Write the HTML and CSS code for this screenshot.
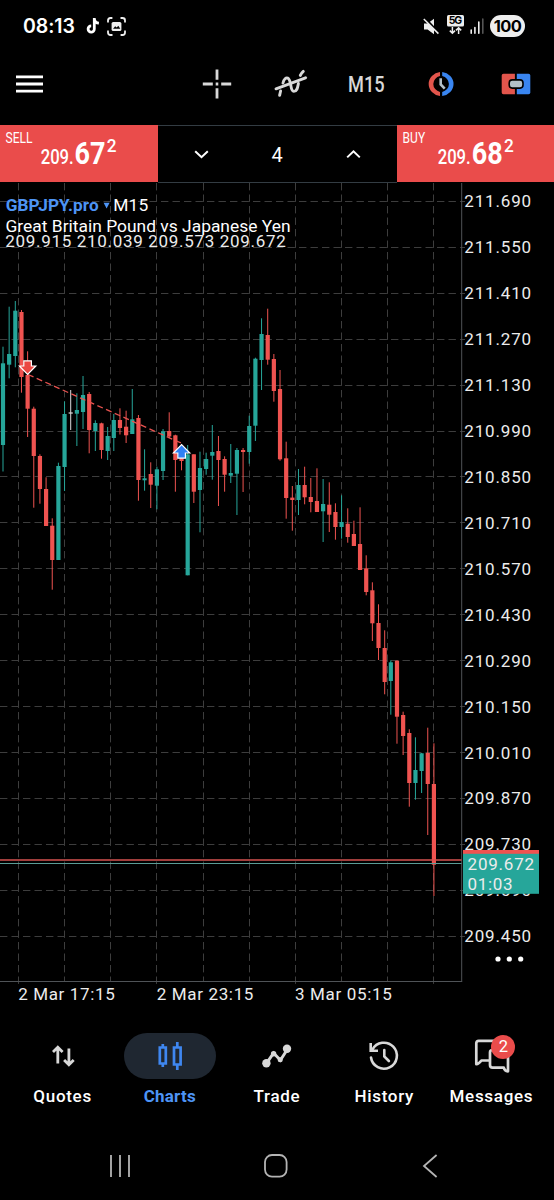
FILE: index.html
```
<!DOCTYPE html>
<html lang="en">

<head>
	<meta charset="UTF-8" />
	<meta name="viewport" content="width=device-width, initial-scale=1.0" />
	<title>GBPJPY.pro M15</title>
	<link rel="stylesheet" href="styles.css">
</head>

<body>
	<div class="status">
		<span class="time">08:13</span>
		<svg class="tiktok" width="14" height="16" viewBox="0 0 14 16">
			<path d="M8.3 0v11a3.1 3.1 0 1 1-3.1-3.1M8.3 1c.4 2.6 2 4 4.6 4.2" fill="none" stroke="#fff" stroke-width="2.8" />
		</svg>
		<svg class="shot" width="19" height="19" viewBox="0 0 19 19">
			<path d="M1 5.5V3.4Q1 1 3.4 1h2M13.5 1h2Q18 1 18 3.4v2.1M18 13.5v2Q18 18 15.6 18h-2M5.5 18h-2Q1 18 1 15.6v-2.1" fill="none" stroke="#eee" stroke-width="1.8" />
			<rect x="4.6" y="5" width="9.8" height="9" rx="1.6" fill="#eee" />
			<path d="M6 11.8l2.2-2.6 1.5 1.3 1.6-1.8 2 3.1z" fill="#000" />
		</svg>
		<div class="status-right">
			<svg width="17" height="17" viewBox="0 0 17 17">
				<path d="M1 5.5h3.6L11 .8v15.4l-6.4-4.7H1z" fill="#eee" />
				<path d="M1.6-.3l15 16" stroke="#000" stroke-width="2.2" />
				<path d="M.8 1l14.6 14.6" stroke="#eee" stroke-width="1.5" />
			</svg>
			<svg class="net" width="17" height="20" viewBox="0 0 17 20">
				<rect width="17" height="11.5" rx="1.5" fill="#eee" />
				<text x="1.8" y="9.4" class="net-text" textLength="13.4">5G</text>
				<path d="M5.4 12v6M2.8 15.6l2.6 2.6L8 15.6M11.6 19v-6M9 15.4l2.6-2.6 2.6 2.6" fill="none" stroke="#eee" stroke-width="1.5" />
			</svg>
			<svg class="signal" width="15" height="16" viewBox="0 0 15 16">
				<path d="M1.2 12v3.2M4.9 9.5v5.7M8.8 4v11.2" stroke="#eee" stroke-width="1.6" stroke-linecap="round" />
				<path d="M12.8 1v14.2" stroke="#555" stroke-width="1.6" stroke-linecap="round" />
			</svg>
			<span class="battery">100</span>
		</div>
	</div>

	<div class="toolbar">
		<svg class="menu" width="27" height="20" viewBox="0 0 27 20">
			<path d="M0 2.8h27M0 10h27M0 17.2h27" stroke="#fff" stroke-width="2.8" />
		</svg>
		<svg class="cross" width="30" height="30" viewBox="0 0 30 30">
			<path d="M15 .6v10.2M15 19.2v10.2M.8 15h10M19.2 15h10M13.7 15h2.6" stroke="#d8d8d8" stroke-width="2.8" />
		</svg>
		<svg class="indicator" width="34" height="30" viewBox="0 0 34 30">
			<g fill="none" stroke="#d8d8d8" stroke-width="2.9" stroke-linecap="round">
				<path d="M2 19.8L31.5 8.8" />
				<path d="M5.6 26.4l1-4.4M9 14c1-4.2 3-5.6 4.8-4.8 4 1.8 2 13.2 6 13.2 3.4 0 3.8-3.8 4.6-8M26.3 6.4q.8-2 3-4" />
			</g>
		</svg>
		<svg class="period" width="40" height="30" viewBox="0 0 40 30">
			<text x="1" y="22.8" textLength="36.6" lengthAdjust="spacingAndGlyphs">M15</text>
		</svg>
		<svg class="clock" width="30" height="26" viewBox="0 0 30 26">
			<path d="M14 1.1A13 12 0 0 0 14 24.9V21A8.6 8.2 0 0 1 14 5z" fill="#e2554c" />
			<path d="M16.2 1.1A13 12 0 0 1 16.2 24.9V21A8.6 8.2 0 0 0 16.2 5z" fill="#3985f0" />
			<path d="M14.7 7.2v6.2l4 4.3" fill="none" stroke="#b4c0c8" stroke-width="2.6" />
		</svg>
		<svg class="order" width="30" height="22" viewBox="0 0 30 22">
			<path d="M2.5.8h11.4v20.4H2.5Q.7 21.2.7 19.4V2.6Q.7.8 2.5.8z" fill="#e2554c" />
			<path d="M15.8.8h11.7q1.8 0 1.8 1.8v16.8q0 1.8-1.8 1.8H15.8z" fill="#3985f0" />
			<rect x="8.2" y="6.9" width="13.8" height="8.2" rx="3" fill="#b4c0c8" stroke="#000" stroke-width="1.6" />
		</svg>
	</div>

	<div class="trade">
		<svg class="price" width="157.5" height="57.4" viewBox="0 0 157.5 57.4">
			<text x="5.5" y="18.2" class="side" textLength="27" lengthAdjust="spacingAndGlyphs">SELL</text>
			<text x="40.7" y="38.7" class="int" textLength="33" lengthAdjust="spacingAndGlyphs">209.</text>
			<text x="74.5" y="38.7" class="big" textLength="31" lengthAdjust="spacingAndGlyphs">67</text>
			<text x="106.7" y="26.7" class="sup" textLength="9.8" lengthAdjust="spacingAndGlyphs">2</text>
		</svg>
		<div class="volume">
			<svg width="15" height="9" viewBox="0 0 15 9"><path d="M1.2 1.2l6.3 6 6.3-6" /></svg>
			<span>4</span>
			<svg width="15" height="9" viewBox="0 0 15 9"><path d="M1.2 7.4l6.3-6 6.3 6" /></svg>
		</div>
		<svg class="price" width="157.5" height="57.4" viewBox="0 0 157.5 57.4">
			<text x="5.6" y="18.2" class="side" textLength="22.5" lengthAdjust="spacingAndGlyphs">BUY</text>
			<text x="40.7" y="38.7" class="int" textLength="33" lengthAdjust="spacingAndGlyphs">209.</text>
			<text x="74.8" y="38.7" class="big" textLength="31" lengthAdjust="spacingAndGlyphs">68</text>
			<text x="107" y="26.7" class="sup" textLength="9.8" lengthAdjust="spacingAndGlyphs">2</text>
		</svg>
	</div>

	<svg class="chart" width="554" height="829" viewBox="0 183 554 829">
		<g id="grid"></g>
		<path d="M461.7 183V981.5M0 981.5H462.2" class="axis" />
		<g id="candles"></g>
		<path d="M0 860H461.5" class="ask" />
		<path d="M0 863.5H461.5" class="bid" />
		<path d="M28 374.5L181 443" class="deal" />
		<path d="M23.8 360.8h7.6v5.2h4.4l-8.2 8.3-8.2-8.3h4.4z" class="sell-mark" />
		<path d="M177.8 458.2h7.6v-5.2h4.4l-8.2-8.3-8.2 8.3h4.4z" class="buy-mark" />
		<g id="labels"></g>
		<rect x="463" y="850" width="76" height="10" class="ask-tag" />
		<rect x="463" y="853.8" width="76" height="40" class="bid-tag" />
		<text x="467.6" y="869.6" textLength="66.5" class="tag-text">209.672</text>
		<text x="467.6" y="889.8" textLength="45" class="tag-text">01:03</text>
		<text x="5.7" y="211.4" textLength="93" class="symbol">GBPJPY.pro</text>
		<path d="M103.6 202.8h6l-3 5.6z" fill="#4d94f5" />
		<text x="113.2" y="211.4" textLength="35" class="title">M15</text>
		<text x="5.5" y="232.4" textLength="285" class="title">Great Britain Pound vs Japanese Yen</text>
		<text x="5.3" y="247" textLength="280.5" class="ohlc">209.915 210.039 209.573 209.672</text>
		<text x="18.2" y="1000" textLength="96.5">2 Mar 17:15</text>
		<text x="156.7" y="1000" textLength="96.7">2 Mar 23:15</text>
		<text x="295" y="1000" textLength="96.7">3 Mar 05:15</text>
		<g fill="#fff">
			<circle cx="498" cy="959" r="2.6" />
			<circle cx="509.3" cy="959" r="2.6" />
			<circle cx="520.7" cy="959" r="2.6" />
		</g>
	</svg>

	<div class="tabs">
		<div class="tab">
			<div class="pill">
				<svg width="26" height="22" viewBox="0 0 26 22">
					<path d="M7.8 18.6V2M3 7l4.8-4.8L12.6 7M18.9 3.4V20M14.1 15l4.8 4.8 4.8-4.8" fill="none" stroke="#d8d8d8" stroke-width="2.8" />
				</svg>
			</div>
			<span>Quotes</span>
		</div>
		<div class="tab active">
			<div class="pill">
				<svg width="26" height="30" viewBox="0 0 26 30">
					<path d="M2.8 6.5h6v16h-6zM5.8 3v3M5.8 23v3M17 6.5h6.6v17H17zM20.3 1v5M20.3 24v5" fill="none" stroke="#3f87f0" stroke-width="2.7" />
				</svg>
			</div>
			<span>Charts</span>
		</div>
		<div class="tab">
			<div class="pill">
				<svg width="32" height="26" viewBox="0 0 32 26">
					<path d="M5.6 20.1L12.6 10l6.8 7.2L26.6 6" fill="none" stroke="#d8d8d8" stroke-width="3" />
					<circle cx="5.4" cy="20.3" r="4.2" fill="#d8d8d8" />
					<circle cx="12.6" cy="10.8" r="2.7" fill="#d8d8d8" />
					<circle cx="19.2" cy="16.8" r="2.5" fill="#d8d8d8" />
					<circle cx="26" cy="5.7" r="4.2" fill="#d8d8d8" />
				</svg>
			</div>
			<span>Trade</span>
		</div>
		<div class="tab">
			<div class="pill">
				<svg width="32" height="32" viewBox="0 0 32 32">
					<g fill="none" stroke="#d8d8d8" stroke-width="2.6" stroke-linecap="round">
						<path d="M3 17.5A13 13 0 1 0 4.4 9.6" />
						<path d="M2.7 4.4v6.3h6" stroke-linecap="square" />
						<path d="M16.3 10v6.4l4.6 4.6" />
					</g>
				</svg>
			</div>
			<span>History</span>
		</div>
		<div class="tab">
			<div class="pill">
				<svg width="37" height="34" viewBox="0 0 37 34">
					<g fill="none" stroke="#d8d8d8" stroke-width="2.7" stroke-linejoin="round">
						<path d="M16 21.5H8.4Q5.8 25 3.3 25.2V4.2Q3.3 1.8 5.7 1.8H28" />
						<path d="M35 17v15.3q-3.6-.4-4.2-3.6H19.6q-2.6 0-2.6-2.6V13.4q0-2.4 2.4-2.4h4" />
					</g>
				</svg>
				<b class="badge">2</b>
			</div>
			<span>Messages</span>
		</div>
	</div>

	<div class="system">
		<svg width="20" height="24" viewBox="0 0 20 24"><path d="M1 1v22M10 1v22M19 1v22" /></svg>
		<svg width="24" height="24" viewBox="0 0 24 24"><rect x="1" y="1" width="21.6" height="21.6" rx="7" /></svg>
		<svg width="19" height="24" viewBox="0 0 19 24"><path d="M14.6 1L2 12l12.6 11" /></svg>
	</div>
	<script src="chart.js"></script>
</body>

</html>
```
FILE: styles.css
```
body {
	margin: 0;
	width: 554px;
	height: 1200px;
	background: #000;
	color: #fff;
	font-family: Roboto, "Liberation Sans", sans-serif;
	overflow: hidden;
}

svg {
	display: block;
	flex: none;
}

/* status bar */
.status {
	height: 52px;
	box-sizing: border-box;
	padding: 0 29px 0 23px;
	display: flex;
	align-items: center;
}

.time {
	width: 63px;
	font: 600 19.5px Inter, sans-serif;
	letter-spacing: -0.1px;
}

.shot {
	margin-left: 7px;
}

.status-right {
	margin-left: auto;
	display: flex;
	align-items: center;
}

.net {
	margin: -2px 6px 0 7px;
}

.net-text {
	font: 700 10.5px Inter, sans-serif;
	fill: #000;
}

.battery {
	width: 35px;
	height: 22px;
	margin-left: 5px;
	border-radius: 11px;
	background: #eee;
	color: #000;
	font: 700 16.5px/22px Inter, sans-serif;
	letter-spacing: -0.6px;
	text-align: center;
}

/* toolbar */
.toolbar {
	height: 73px;
	box-sizing: border-box;
	padding: 0 23px 9px 16px;
	display: flex;
	align-items: center;
}

.cross {
	margin-left: 159px;
}

.indicator {
	margin-left: 42px;
}

.period {
	margin-left: 39px;
}

.period text {
	font-size: 22.5px;
	font-weight: 500;
	fill: #d8d8d8;
}

.clock {
	margin-left: 39px;
}

.order {
	margin-left: auto;
}

/* one click trading */
.trade {
	height: 58px;
	display: flex;
}

.price {
	background: #ea4c4b;
}

.price .side {
	font-size: 13.8px;
}

.price .int {
	font-size: 19.7px;
	font-weight: 500;
}

.price .big {
	font-size: 32px;
	font-weight: 700;
}

.price .sup {
	font-size: 18.8px;
	font-weight: 500;
}

.volume {
	flex: 1;
	box-sizing: border-box;
	border: 1px solid #333c43;
	border-width: 1px 0;
	padding: 0 36px;
	display: flex;
	align-items: center;
	justify-content: space-between;
	font-size: 20px;
	line-height: 54px;
}

.volume span {
	padding-top: 2px;
}

.volume path {
	fill: none;
	stroke: #fff;
	stroke-width: 2;
}

/* chart */
text {
	fill: #fff;
}

.chart text {
	font-size: 17px;
	fill: #ececec;
}

.chart .title {
	font-size: 17.4px;
	fill: #fff;
}

.chart .symbol {
	font-size: 17.2px;
	font-weight: 700;
	fill: #4d94f5;
}

.grid {
	stroke: #3d3d3d;
	stroke-width: 1;
	fill: none;
}

.axis {
	stroke: #4f5357;
	fill: none;
}

.up {
	stroke: #26a69a;
}

.down {
	stroke: #ef5350;
}

.flat {
	stroke: #ddd;
}

.body {
	stroke-width: 4.2;
}

.ask {
	stroke: #d65350;
	stroke-width: 1.3;
}

.bid {
	stroke: #5a9c96;
	stroke-width: 1;
}

.deal {
	stroke: #e8524f;
	stroke-width: 1.3;
	stroke-dasharray: 6 3.5;
}

.sell-mark {
	fill: #ea4742;
	stroke: #fff;
	stroke-width: 1.2;
}

.buy-mark {
	fill: #2f80f5;
	stroke: #fff;
	stroke-width: 1.2;
}

.ask-tag {
	fill: #ef5350;
}

.bid-tag {
	fill: #26a69a;
}

/* tabs */
.tabs {
	height: 118px;
	padding: 21px 9px 0;
	box-sizing: border-box;
	display: flex;
}

.tab {
	flex: 1;
	display: flex;
	flex-direction: column;
	align-items: center;
	font-size: 17px;
	font-weight: 500;
	letter-spacing: 0.7px;
}

.tab span {
	margin-top: 7px;
}

.pill {
	position: relative;
	width: 92px;
	height: 46px;
	border-radius: 23px;
	display: flex;
	align-items: center;
	justify-content: center;
}

.active {
	color: #4d94f5;
	font-weight: 700;
	letter-spacing: 0.2px;
}

.active .pill {
	background: #1f2731;
}

.badge {
	position: absolute;
	left: 46px;
	top: 2px;
	width: 24px;
	height: 24px;
	border-radius: 50%;
	background: #ea4c4b;
	font-size: 16.5px;
	font-weight: 400;
	line-height: 24px;
	letter-spacing: 0;
	text-align: center;
}

/* system buttons */
.system {
	padding: 24px 113px 0 110px;
	display: flex;
	justify-content: space-between;
}

.system path,
.system rect {
	fill: none;
	stroke: #b4b4b4;
	stroke-width: 1.8;
}
```
FILE: chart.js
```
var grid = document.getElementById("grid");
var candles = document.getElementById("candles");
var labels = document.getElementById("labels");

var step = 6.156;
var colors = { u: "up", d: "down", f: "flat" };

// direction, high, body top, body bottom, low
var data = [
	["u", 346.7, 363.3, 445, 471.5], ["u", 306.7, 354, 364.7, 378.3], ["u", 301, 310.7, 356, 367.3],
	["d", 310, 312, 377, 392.7], ["d", 351.3, 375, 408.7, 437], ["d", 406.7, 408.7, 456, 507.7],
	["d", 454.3, 456, 489, 503.7], ["d", 477.3, 489, 526, 526], ["d", 518.3, 525.7, 560, 589.7],
	["u", 462.7, 466, 560, 560], ["u", 401.3, 414, 467, 491], ["f", 390, 412.4, 413.6, 430],
	["u", 393.3, 410, 413.7, 446], ["u", 376, 395, 412, 429], ["d", 392, 394, 430, 453.3],
	["u", 420.3, 423, 431, 451], ["d", 422.7, 423.3, 450, 458.7], ["u", 427, 436, 451, 460],
	["u", 414, 420, 438, 451], ["d", 408.3, 420, 428, 434.5], ["d", 410.7, 426.7, 435.3, 443],
	["u", 389, 419.3, 434, 434], ["d", 415, 418, 480, 500.7], ["u", 449.3, 478.3, 480.3, 490.7],
	["d", 462.3, 474, 484.7, 508], ["u", 466.7, 469.3, 485.7, 509.3], ["u", 429, 431.3, 471, 480],
	["d", 412.3, 431, 436.5, 438.3], ["d", 434.7, 435.3, 460, 491.7], ["d", 444, 446, 461, 470.3],
	["u", 445, 454.3, 575.3, 575.3], ["d", 454.3, 454.3, 491.7, 503], ["u", 451.7, 468, 490, 532.3],
	["u", 452.7, 459, 469, 474.7], ["u", 425, 452, 455.7, 479.7], ["d", 436, 451, 460, 506],
	["d", 456.3, 459, 474.7, 491.7], ["u", 444, 473, 475.7, 483], ["u", 448, 450, 473.7, 515],
	["d", 448, 450, 452, 492], ["u", 415.7, 426, 452, 463.7], ["u", 357.7, 358.7, 425.7, 441],
	["u", 318.3, 334, 360, 390], ["d", 308.7, 335, 359.7, 364.7], ["d", 354, 359, 391, 401.7],
	["d", 370, 389, 459.3, 460.7], ["d", 441.7, 458.3, 498, 518.7], ["d", 486, 497.6, 500, 530.7],
	["u", 469, 485, 500, 515], ["d", 466.7, 485, 497.3, 504.3], ["d", 478, 497, 502, 512.3],
	["d", 468.3, 501, 512, 512], ["u", 479, 504, 511.3, 542], ["d", 482.3, 504.7, 514.7, 532],
	["d", 503.3, 512, 527, 539.7], ["u", 495.3, 522, 527, 538.7], ["d", 508.3, 523.7, 537, 542.7],
	["d", 520.7, 534, 546, 546], ["d", 507.3, 544, 570, 570], ["d", 555.3, 568.3, 592, 595.3],
	["d", 582.3, 590.3, 623.3, 641], ["d", 604.3, 623, 648, 660], ["d", 630.3, 648, 682, 694.3],
	["u", 660.3, 662.3, 681, 714.7], ["d", 660.5, 660.7, 716.7, 743.7], ["d", 711.7, 715, 736, 755],
	["d", 729.3, 733, 783, 806.7], ["u", 737.3, 770, 783, 799.7], ["u", 753, 753.3, 771, 793],
	["d", 727.7, 753, 784, 835], ["d", 743.3, 784, 864.7, 896]
];

function line(x1, y1, x2, y2, cls, dash) {
	return '<path d="M' + x1 + " " + y1 + "L" + x2 + " " + y2 + '" class="' + cls + '"' +
		(dash ? ' stroke-dasharray="' + dash + '"' : "") + " />";
}

var html = "";
var text = "";
for (var i = 0; i < 17; i++) {
	var y = 201.2 + i * 45.96;
	html += line(0, Math.floor(y) + 0.5, 465, Math.floor(y) + 0.5, "grid", "7.4 4.1");
	text += '<text x="464.3" y="' + (y + 5.8) + '" textLength="66.8">' + (211.69 - i * 0.14).toFixed(3) + "</text>";
}
for (var i = 0; i < 10; i++) {
	var x = Math.floor(18.5 + i * 46.16) + 0.5;
	html += line(x, 183, x, i % 3 == 0 ? 985 : 981, "grid", "7.4 4.1");
}
grid.innerHTML = html;
labels.innerHTML = text;

html = "";
for (var i = 0; i < data.length; i++) {
	var d = data[i];
	var x = 3 + i * step;
	html += line(x, d[1], x, d[4], colors[d[0]]);
	html += line(x, d[2], x, d[3], "body " + colors[d[0]]);
}
candles.innerHTML = html;
```
